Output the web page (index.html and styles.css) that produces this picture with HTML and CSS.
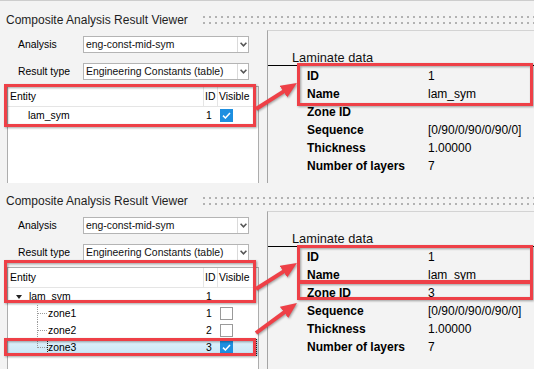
FILE: index.html
```html
<!DOCTYPE html>
<html lang="en">
<head>
    <meta charset="UTF-8">
    <title>Composite Analysis Result Viewer</title>
    <link rel="stylesheet" href="styles.css">
</head>
<body>
    <!-- First capture: laminate selected -->
    <div class="viewer first">
        <div class="head">
            <span class="title">Composite Analysis Result Viewer</span>
            <span class="dots"></span>
        </div>
        <div class="main">
            <div class="left">
                <div class="fields">
                    <div class="field">
                        <span class="label">Analysis</span>
                        <div class="combo">
                            <span class="value">eng-const-mid-sym</span>
                            <span class="drop"><svg width="7" height="5" viewBox="0 0 7 5"><path d="M0.6 0.8 L3.5 3.8 L6.4 0.8" fill="none" stroke="#555" stroke-width="1.6"/></svg></span>
                        </div>
                    </div>
                    <div class="field">
                        <span class="label">Result type</span>
                        <div class="combo">
                            <span class="value">Engineering Constants (table)</span>
                            <span class="drop"><svg width="7" height="5" viewBox="0 0 7 5"><path d="M0.6 0.8 L3.5 3.8 L6.4 0.8" fill="none" stroke="#555" stroke-width="1.6"/></svg></span>
                        </div>
                    </div>
                </div>
                <div class="tree">
                    <div class="row header">
                        <span class="cell entity">Entity</span>
                        <span class="cell id">ID</span>
                        <span class="cell vis">Visible</span>
                    </div>
                    <div class="row">
                        <span class="cell entity leaf">lam_sym</span>
                        <span class="cell id">1</span>
                        <span class="cell vis"><span class="check on"><svg width="9" height="7" viewBox="0 0 9 7"><path d="M1 3.6 L3.4 6 L8 1" fill="none" stroke="#fff" stroke-width="1.5"/></svg></span></span>
                    </div>
                </div>
            </div>
            <div class="right">
                <div class="section">Laminate data</div>
                <div class="props">
                    <div class="prop"><span class="key">ID</span><span class="val">1</span></div>
                    <div class="prop"><span class="key">Name</span><span class="val">lam_sym</span></div>
                    <div class="prop"><span class="key">Zone ID</span><span class="val"></span></div>
                    <div class="prop"><span class="key">Sequence</span><span class="val">[0/90/0/90/0/90/0]</span></div>
                    <div class="prop"><span class="key">Thickness</span><span class="val">1.00000</span></div>
                    <div class="prop"><span class="key">Number of layers</span><span class="val">7</span></div>
                </div>
            </div>
        </div>
    </div>

    <!-- Second capture: zone selected -->
    <div class="viewer second">
        <div class="head">
            <span class="title">Composite Analysis Result Viewer</span>
            <span class="dots"></span>
        </div>
        <div class="main">
            <div class="left">
                <div class="fields">
                    <div class="field">
                        <span class="label">Analysis</span>
                        <div class="combo">
                            <span class="value">eng-const-mid-sym</span>
                            <span class="drop"><svg width="7" height="5" viewBox="0 0 7 5"><path d="M0.6 0.8 L3.5 3.8 L6.4 0.8" fill="none" stroke="#555" stroke-width="1.6"/></svg></span>
                        </div>
                    </div>
                    <div class="field">
                        <span class="label">Result type</span>
                        <div class="combo">
                            <span class="value">Engineering Constants (table)</span>
                            <span class="drop"><svg width="7" height="5" viewBox="0 0 7 5"><path d="M0.6 0.8 L3.5 3.8 L6.4 0.8" fill="none" stroke="#555" stroke-width="1.6"/></svg></span>
                        </div>
                    </div>
                </div>
                <div class="tree">
                    <div class="row header">
                        <span class="cell entity">Entity</span>
                        <span class="cell id">ID</span>
                        <span class="cell vis">Visible</span>
                    </div>
                    <div class="row">
                        <span class="cell entity parent"><span class="twisty"></span>lam_sym</span>
                        <span class="cell id">1</span>
                        <span class="cell vis"></span>
                    </div>
                    <div class="row">
                        <span class="cell entity child"><span class="branch"></span>zone1</span>
                        <span class="cell id">1</span>
                        <span class="cell vis"><span class="check"></span></span>
                    </div>
                    <div class="row">
                        <span class="cell entity child"><span class="branch"></span>zone2</span>
                        <span class="cell id">2</span>
                        <span class="cell vis"><span class="check"></span></span>
                    </div>
                    <div class="row selected">
                        <span class="cell entity child"><span class="branch last"></span>zone3</span>
                        <span class="cell id">3</span>
                        <span class="cell vis"><span class="check on"><svg width="9" height="7" viewBox="0 0 9 7"><path d="M1 3.6 L3.4 6 L8 1" fill="none" stroke="#fff" stroke-width="1.5"/></svg></span></span>
                    </div>
                </div>
            </div>
            <div class="right">
                <div class="section">Laminate data</div>
                <div class="props">
                    <div class="prop"><span class="key">ID</span><span class="val">1</span></div>
                    <div class="prop"><span class="key">Name</span><span class="val">lam_sym</span></div>
                    <div class="prop"><span class="key">Zone ID</span><span class="val">3</span></div>
                    <div class="prop"><span class="key">Sequence</span><span class="val">[0/90/0/90/0/90/0]</span></div>
                    <div class="prop"><span class="key">Thickness</span><span class="val">1.00000</span></div>
                    <div class="prop"><span class="key">Number of layers</span><span class="val">7</span></div>
                </div>
            </div>
        </div>
    </div>

    <!-- Red callouts drawn over the captures -->
    <svg class="marks" width="534" height="369" viewBox="0 0 534 369">
        <defs>
            <marker id="head" markerUnits="userSpaceOnUse" markerWidth="17" markerHeight="15" refX="6" refY="7" orient="auto">
                <path d="M0,0 L16,7 L0,14 z" fill="#ee4047"/>
            </marker>
        </defs>
        <g fill="none" stroke="#ee4047" stroke-width="3">
            <rect x="5.5" y="85.5" width="249" height="40"/>
            <rect x="298.5" y="64.5" width="233" height="40"/>
            <rect x="5.5" y="261.5" width="249" height="40"/>
            <rect x="5.5" y="339.5" width="249" height="15"/>
            <rect x="298.5" y="246.5" width="233" height="35"/>
            <rect x="298.5" y="282.5" width="233" height="16"/>
        </g>
        <g stroke="#ee4047" stroke-width="4">
            <line x1="256" y1="109" x2="288.5" y2="88.4" marker-end="url(#head)"/>
            <line x1="256" y1="289" x2="288.5" y2="268.4" marker-end="url(#head)"/>
            <line x1="256" y1="333" x2="288.9" y2="308.9" marker-end="url(#head)"/>
        </g>
    </svg>
</body>
</html>
```

FILE: styles.css
```css
/* General Reset */
* {
    margin: 0;
    padding: 0;
    box-sizing: border-box;
}

body {
    position: relative;
    width: 534px;
    height: 369px;
    overflow: hidden;
    background-color: #f3f3f3;
    font-family: "Liberation Sans", Arial, sans-serif;
    color: #000;
}

/* Viewer capture */
.viewer {
    overflow: hidden;
}

.viewer.first {
    height: 183px;
    border-top: 1px solid #cdcdcd;
    padding-top: 12px;
}

.viewer.second {
    height: 186px;
    padding-top: 11px;
}

.head {
    display: flex;
    align-items: center;
    height: 14px;
}

.title {
    padding-left: 6px;
    font-size: 12px;
    color: #1e1e1e;
}

.dots {
    flex: 1;
    height: 8px;
    margin-left: 15px;
    background:
        linear-gradient(90deg, #b2b2b2 0 2px, transparent 2px) 0 0 / 6px 2px repeat-x,
        linear-gradient(90deg, #b2b2b2 0 2px, transparent 2px) 0 6px / 6px 2px repeat-x;
}

.main {
    display: flex;
    height: 170px;
    margin-top: 3px;
}

/* Left side: combos and tree */
.left {
    width: 267px;
    padding-top: 6px;
}

.fields {
    display: grid;
    gap: 10px;
    margin-bottom: 6px;
}

.field {
    display: flex;
    align-items: center;
    height: 17px;
}

.label {
    width: 83px;
    padding-left: 18px;
    font-size: 10.4px;
}

.combo {
    display: flex;
    width: 166px;
    height: 17px;
    border: 1px solid #b4b4b4;
    background-color: #fff;
}

.combo .value {
    flex: 1;
    padding-left: 2px;
    font-size: 10.4px;
    line-height: 15px;
    color: #111;
}

.drop {
    display: flex;
    align-items: center;
    justify-content: center;
    width: 11px;
    border-left: 1px solid #dadada;
}

.tree {
    width: 252px;
    height: 120px;
    margin-left: 7px;
    background-color: #fff;
    border: 1px solid #adadad;
}

.row {
    position: relative;
    display: grid;
    grid-template-columns: 196px 14px 1fr;
    height: 17px;
    font-size: 10.4px;
}

.row.header {
    height: 20px;
    border-bottom: 1px solid #e5e5e5;
}

.cell {
    display: flex;
    align-items: center;
    white-space: nowrap;
}

.header .cell {
    border-right: 1px solid #e5e5e5;
}

.header .entity {
    padding-left: 2px;
}

.header .id,
.header .vis {
    padding-left: 1px;
}

.header .vis {
    border-right: none;
}

.id {
    padding-left: 2px;
}

.vis {
    padding-left: 2px;
}

.entity.leaf {
    padding-left: 20px;
}

.entity.parent {
    padding-left: 8px;
}

.entity.child {
    padding-left: 29px;
    align-items: stretch;
    line-height: 17px;
}

.twisty {
    width: 0;
    height: 0;
    margin-right: 7px;
    border-left: 3px solid transparent;
    border-right: 3px solid transparent;
    border-top: 4px solid #222;
}

/* dotted tree branches */
.branch {
    position: relative;
    width: 10px;
    margin-right: 1px;
}

.branch::before {
    content: "";
    position: absolute;
    left: 0;
    top: 0;
    bottom: 0;
    border-left: 1px dotted #9a9a9a;
}

.branch.last::before {
    bottom: 8px;
}

.branch::after {
    content: "";
    position: absolute;
    left: 0;
    right: 0;
    top: 8px;
    border-top: 1px dotted #9a9a9a;
}

.row.selected {
    background: linear-gradient(#e0f1fb, #c7e6f6);
}

.row.selected::after {
    content: "";
    position: absolute;
    left: 39px;
    right: 1px;
    top: 0;
    bottom: 0;
    border: 1px dotted #222;
}

.check {
    display: inline-flex;
    align-items: center;
    justify-content: center;
    width: 13px;
    height: 13px;
    border: 1px solid #9a9a9a;
    background-color: #fff;
}

.check.on {
    background-color: #1d8fe0;
    border-color: #1d8fe0;
}

/* Right side: laminate data */
.right {
    flex: 1;
    border-left: 1px solid #a5a5a5;
    border-top: 1px solid #d3d3d3;
}

.section {
    height: 15px;
    margin-top: 20px;
    padding-left: 24px;
    font-size: 12.8px;
    line-height: 14px;
    color: #111;
    border-bottom: 1px solid #000;
}

.props {
    padding-top: 1px;
}

.prop {
    display: flex;
    align-items: center;
    height: 18px;
    font-size: 12px;
}

.key {
    width: 160px;
    padding-left: 39px;
    font-weight: bold;
}

/* Callouts */
.marks {
    position: absolute;
    top: 0;
    left: 0;
    filter: drop-shadow(1px 1px 1px rgba(0, 0, 0, 0.35));
}
```
